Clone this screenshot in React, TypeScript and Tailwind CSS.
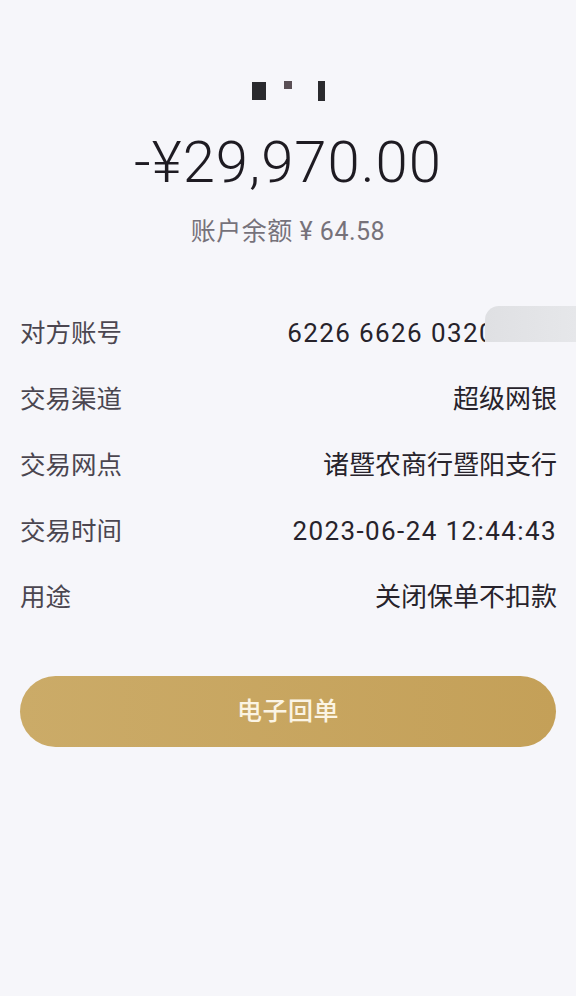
export default function App() {
  const rows = [
    { label: '对方账号', value: '6226 6626 0320', masked: true, digits: true },
    { label: '交易渠道', value: '超级网银' },
    { label: '交易网点', value: '诸暨农商行暨阳支行' },
    { label: '交易时间', value: '2023-06-24 12:44:43', digits: true },
    { label: '用途', value: '关闭保单不扣款' },
  ];

  return (
    <div
      className="w-[576px] h-[996px] bg-[#f6f6fa] overflow-hidden"
      style={{ fontFamily: 'Roboto, "Noto Sans CJK SC", sans-serif' }}
    >
      <div className="flex flex-col items-center pt-[81px]">
        <div className="flex items-start h-[20px]">
          <div className="w-[14px] h-[18px] bg-[#2a2a2e] mt-[1px]" />
          <div className="w-[8px] h-[8px] bg-[#5a4f55] ml-[18px]" />
          <div className="w-[7px] h-[20px] bg-[#2a2a2e] ml-[26px]" />
        </div>
        <div className="mt-[29px] text-[58px] leading-[64px] font-light text-[#1e1b22] tracking-[1px]">
          -¥29,970.00
        </div>
        <div className="mt-[23px] text-[25px] leading-[30px] text-[#76727a] tracking-[0.5px]">
          账户余额 ¥ 64.58
        </div>
      </div>

      <div className="mt-[53px] flex flex-col">
        {rows.map((r) => (
          <div key={r.label} className="h-[66px] flex items-center justify-between pl-[20px] pr-[19px] relative">
            <span className="text-[25.5px] text-[#4b4650]">{r.label}</span>
            <span
              className={
                r.digits
                  ? r.masked
                    ? 'text-[26px] text-[#27232b] tracking-[1.4px] whitespace-nowrap mr-[62px]'
                    : 'text-[26px] text-[#27232b] tracking-[1.4px] whitespace-nowrap'
                  : 'text-[26px] text-[#27232b] whitespace-nowrap'
              }
            >
              {r.value}
            </span>
            {r.masked && (
              <div className="absolute right-0 top-[6px] w-[91px] h-[36px] bg-gradient-to-r from-[#dfe0e3] to-[#e6e7ea] rounded-tl-[14px]" />
            )}
          </div>
        ))}
      </div>

      <div className="mx-[20px] mt-[46px] h-[71px] rounded-full bg-gradient-to-r from-[#cbab68] to-[#c4a058] flex items-center justify-center">
        <span className="text-[25px] font-medium text-[#fbf4e4] tracking-[0.5px]">电子回单</span>
      </div>
    </div>
  );
}
